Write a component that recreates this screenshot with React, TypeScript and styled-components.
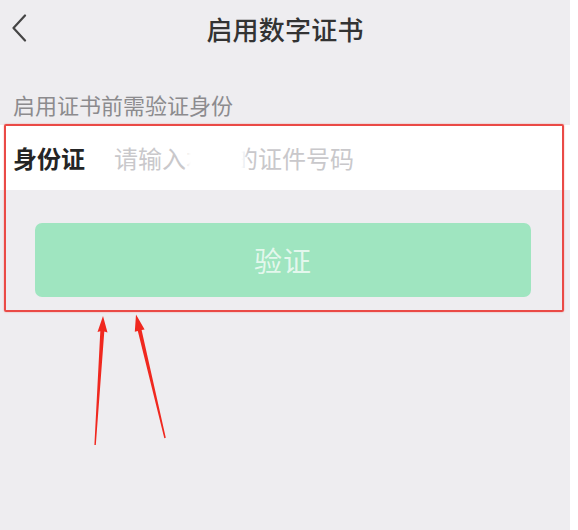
import styled, { createGlobalStyle } from "styled-components";

const GlobalStyle = createGlobalStyle`
  html, body {
    margin: 0;
    padding: 0;
    background: #ffffff;
  }
  body {
    font-family: "Noto Sans CJK SC", "Noto Sans", sans-serif;
  }
`;

const Page = styled.div`
  position: relative;
  width: 570px;
  height: 530px;
  background-color: #eeedf0;
  overflow: hidden;
`;

const Header = styled.div`
  display: grid;
  grid-template-columns: 48px 1fr 48px;
  align-items: center;
  height: 56px;
`;

const BackButton = styled.button`
  display: flex;
  align-items: center;
  justify-content: flex-start;
  padding: 0 0 0 11px;
  height: 56px;
  border: none;
  background: transparent;
  cursor: pointer;
`;

const Title = styled.div`
  text-align: center;
  font-size: 26px;
  font-weight: 500;
  color: #333333;
  letter-spacing: 0.2px;
`;

const Hint = styled.p`
  margin: 33px 0 5px;
  padding-left: 13px;
  height: 30px;
  line-height: 30px;
  font-size: 22px;
  color: #8c8b8e;
`;

const VerifySection = styled.section`
  position: relative;
  padding-top: 1px;
`;

const FieldRow = styled.div`
  display: flex;
  align-items: center;
  height: 65px;
  padding-left: 13px;
  background-color: #ffffff;
`;

const Label = styled.span`
  font-size: 24px;
  font-weight: 700;
  color: #252525;
  margin-right: 29px;
`;

const Placeholder = styled.span`
  position: relative;
  font-size: 24px;
  color: #c9c8cb;
`;

/* the blurred-out part of the placeholder */
const Smudge = styled.span`
  position: absolute;
  left: 76px;
  top: 2px;
  width: 52px;
  height: 32px;
  background: #ffffff;
  box-shadow: 0 0 3px 3px #ffffff;
  filter: blur(1.5px);
`;

const ButtonWrap = styled.div`
  padding: 33px 39px 14px 35px;
`;

const VerifyButton = styled.button`
  display: block;
  width: 100%;
  height: 74px;
  border: none;
  border-radius: 7px;
  background-color: #9fe5c0;
  color: rgba(255, 255, 255, 0.72);
  font-family: inherit;
  font-size: 28px;
  letter-spacing: 1px;
  cursor: default;
`;

const RedFrame = styled.div`
  position: absolute;
  left: 4px;
  top: 0;
  width: 556px;
  height: 184px;
  border: 2.5px solid #ea4a46;
  border-radius: 2px;
  box-shadow: 0 0 1.5px rgba(234, 74, 70, 0.7);
  pointer-events: none;
`;

const Arrows = styled.svg`
  position: absolute;
  left: 0;
  top: 0;
  pointer-events: none;
`;

export default function App() {
  return (
    <>
      <GlobalStyle />
      <Page>
        <Header>
          <BackButton aria-label="返回">
            <svg width="18" height="28" viewBox="0 0 18 28">
              <path
                d="M14 1.5 L2.5 14 L14 26.5"
                fill="none"
                stroke="#454545"
                strokeWidth="2.2"
                strokeLinecap="round"
                strokeLinejoin="round"
              />
            </svg>
          </BackButton>
          <Title>启用数字证书</Title>
          <div />
        </Header>
        <Hint>启用证书前需验证身份</Hint>
        <VerifySection>
          <FieldRow>
            <Label>身份证</Label>
            <Placeholder>
              请输入本人的证件号码
              <Smudge />
            </Placeholder>
          </FieldRow>
          <ButtonWrap>
            <VerifyButton disabled>验证</VerifyButton>
          </ButtonWrap>
          <RedFrame />
        </VerifySection>
        <Arrows width="570" height="530" viewBox="0 0 570 530">
          <polygon
            points="103,316 107.5,332.5 104.3,331.5 95.8,445 94.4,445 100.3,331.2 97.5,332"
            fill="#f0281f"
          />
          <polygon
            points="136,314.5 144.6,329.5 141.6,330.1 165.8,437.8 164.3,438.3 137.8,331.1 134.8,331.7"
            fill="#f0281f"
          />
        </Arrows>
      </Page>
    </>
  );
}
